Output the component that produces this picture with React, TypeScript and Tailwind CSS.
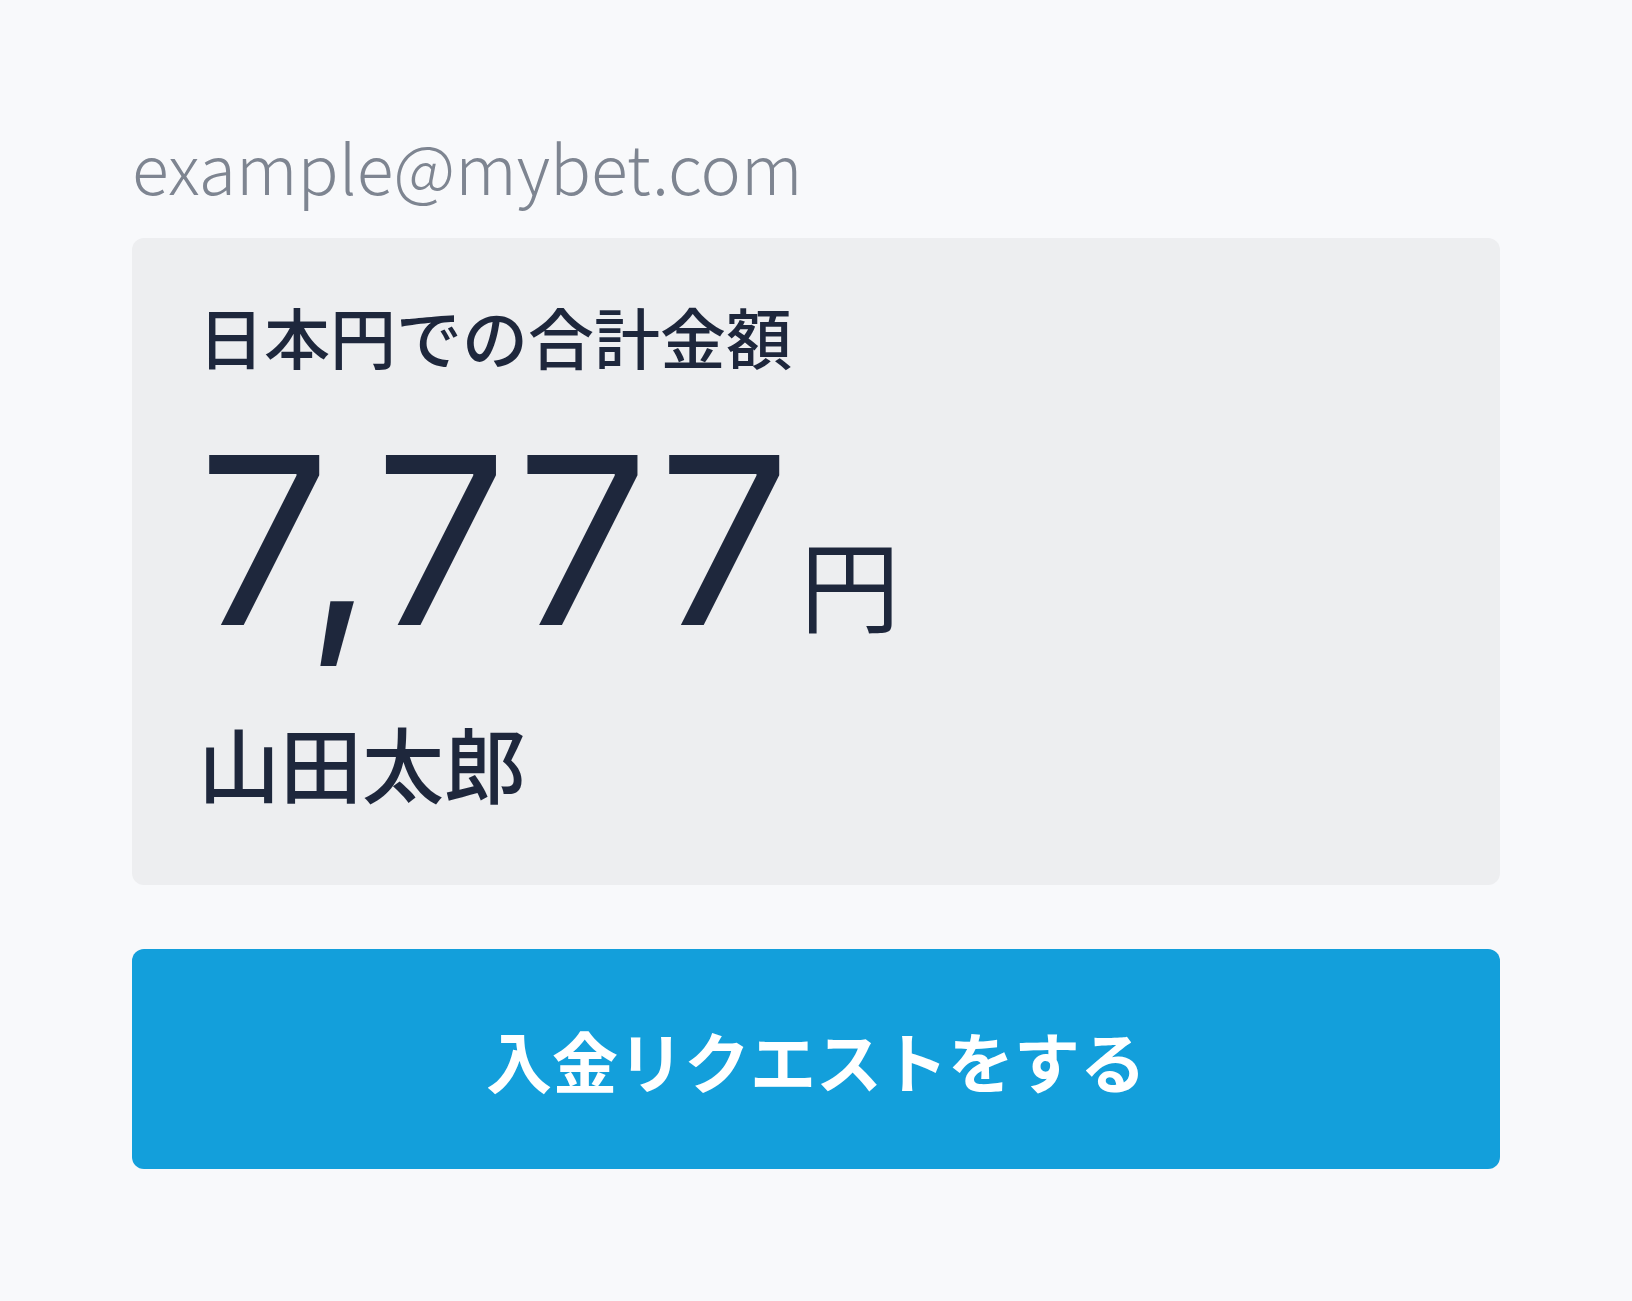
export default function App() {
  return (
    <div className="min-h-screen bg-[#f8f9fb] px-[132px] pt-[132px] font-['Noto_Sans_CJK_JP','Noto_Sans',sans-serif]">
      {/* Account email */}
      <p className="text-[68px] font-light leading-none text-[#7e8591]">example@mybet.com</p>

      {/* Total card */}
      <div className="mt-[38px] rounded-xl bg-[#edeef0] px-[66px] pt-[64px] pb-[82px] text-[#1e273c]">
        <h2 className="text-[66px] font-medium leading-none">日本円での合計金額</h2>
        <div className="mt-[55px] flex items-baseline">
          <span className="font-['Inter',sans-serif] text-[234px] leading-none tracking-[0.02em]">7,777</span>
          <span className="ml-[5px] text-[100px] leading-none">円</span>
        </div>
        <p className="mt-[64px] text-[82px] font-medium leading-none">山田太郎</p>
      </div>

      <button
        type="button"
        className="mt-16 flex h-[220px] w-full items-center justify-center rounded-xl bg-[#139fdb] text-[66px] font-bold text-white"
      >
        入金リクエストをする
      </button>
    </div>
  );
}
